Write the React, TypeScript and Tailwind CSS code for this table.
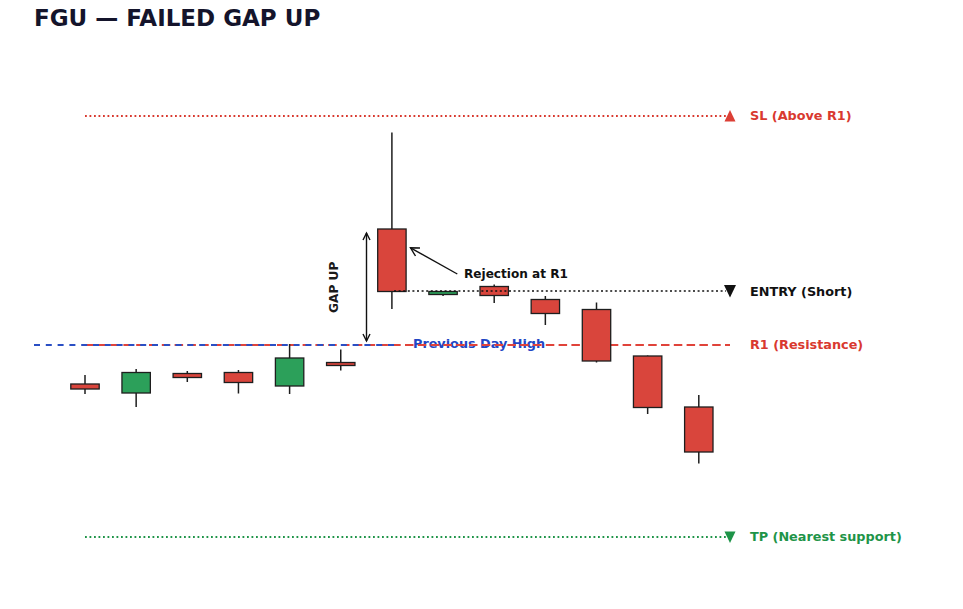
import React from "react";

type Candle = { wt: number; wb: number; bt: number; bb: number; up: boolean };

const candles: Candle[] = [
  { wt: 375, wb: 394, bt: 384, bb: 389, up: false },
  { wt: 369, wb: 407, bt: 372.5, bb: 393, up: true },
  { wt: 371, wb: 382, bt: 373.5, bb: 377.5, up: false },
  { wt: 370, wb: 393.5, bt: 372.5, bb: 382.5, up: false },
  { wt: 344, wb: 394, bt: 358, bb: 386, up: true },
  { wt: 349.5, wb: 370.5, bt: 362.5, bb: 365.5, up: false },
  { wt: 132.5, wb: 309, bt: 229, bb: 291.5, up: false },
  { wt: 291, wb: 296, bt: 291.5, bb: 294.5, up: true },
  { wt: 284.5, wb: 303, bt: 286.5, bb: 295.5, up: false },
  { wt: 296, wb: 325, bt: 299.5, bb: 313.5, up: false },
  { wt: 302.5, wb: 362.5, bt: 309.5, bb: 361, up: false },
  { wt: 355.5, wb: 414, bt: 356, bb: 407.5, up: false },
  { wt: 395, wb: 463.5, bt: 407, bb: 452, up: false },
];

const RED = "#d9453c";
const GREEN = "#2ca05a";
const EDGE = "#1e1e1e";

function Chart() {
  return (
    <svg width={963} height={569} viewBox="0 40 963 569" className="block">
      {/* SL line */}
      <line x1={85} y1={116} x2={726} y2={116} stroke="#d9392f" strokeWidth={1.9} strokeDasharray="1.8 2.7" />
      <polygon points="730,110 724.5,121.5 735.5,121.5" fill="#dc3f35" />
      <text x={750} y={120} fontSize={12.8} fill="#d9392f">SL (Above R1)</text>

      {/* TP line */}
      <line x1={85} y1={537} x2={726} y2={537} stroke="#1e9448" strokeWidth={1.9} strokeDasharray="1.8 2.7" />
      <polygon points="724.5,531.5 735.5,531.5 730,543" fill="#1e9448" />
      <text x={750} y={541} fontSize={12.8} fill="#1e9448">TP (Nearest support)</text>

      {/* Previous Day High label */}
      <text x={413} y={347.5} fontSize={12.8} fill="#1f47c4">Previous Day High</text>

      {/* R1 */}
      <line x1={85} y1={345} x2={730} y2={345} stroke="#e0433a" strokeWidth={1.9} strokeDasharray="8.5 4.3" />
      <text x={750} y={349} fontSize={12.8} fill="#d9392f">R1 (Resistance)</text>

      {/* Previous Day High line */}
      <line x1={34} y1={345} x2={398} y2={345} stroke="#2a4fc4" strokeWidth={1.8} strokeDasharray="6 5.8" />

      {/* Candles */}
      {candles.map((c, i) => {
        const x = 85 + 51.15 * i;
        return (
          <g key={i}>
            <line x1={x} y1={c.wt} x2={x} y2={c.wb} stroke={EDGE} strokeWidth={1.5} />
            <rect
              x={x - 14.2}
              y={c.bt}
              width={28.4}
              height={Math.max(c.bb - c.bt, 1)}
              fill={c.up ? GREEN : RED}
              stroke={EDGE}
              strokeWidth={1.3}
            />
          </g>
        );
      })}

      {/* Entry line */}
      <line x1={394} y1={291} x2={726} y2={291} stroke="#111111" strokeWidth={1.7} strokeDasharray="2 2.6" />
      <polygon points="724,285 736,285 730,297.5" fill="#111111" />
      <text x={750} y={295.5} fontSize={12.8} fill="#111111">ENTRY (Short)</text>

      {/* Gap up arrow */}
      <line x1={366.5} y1={233} x2={366.5} y2={341} stroke="#111111" strokeWidth={1.4} />
      <polyline points="363,240 366.5,233 370,240" fill="none" stroke="#111111" strokeWidth={1.4} />
      <polyline points="363,334 366.5,341 370,334" fill="none" stroke="#111111" strokeWidth={1.4} />
      <text
        x={338.3}
        y={287.3}
        fontSize={12.2}
        fill="#1a1a1a"
        textAnchor="middle"
        transform="rotate(-90 338.3 287.3)"
      >
        GAP UP
      </text>

      {/* Rejection arrow */}
      <line x1={457.3} y1={274} x2={410.5} y2={247.8} stroke="#111111" strokeWidth={1.4} />
      <polyline points="415.5,256 410.5,247.8 420,248" fill="none" stroke="#111111" strokeWidth={1.4} />
      <text x={464} y={277.5} fontSize={12.1} fill="#111111">Rejection at R1</text>
    </svg>
  );
}

export default function App() {
  return (
    <div className="w-[963px] h-[609px] bg-white overflow-hidden font-['DejaVu_Sans',sans-serif] font-bold">
      <div className="h-[40px] pl-[34px] pt-[5px] text-[23px] leading-[27px] text-[#14142b]">
        FGU — FAILED GAP UP
      </div>
      <Chart />
    </div>
  );
}
